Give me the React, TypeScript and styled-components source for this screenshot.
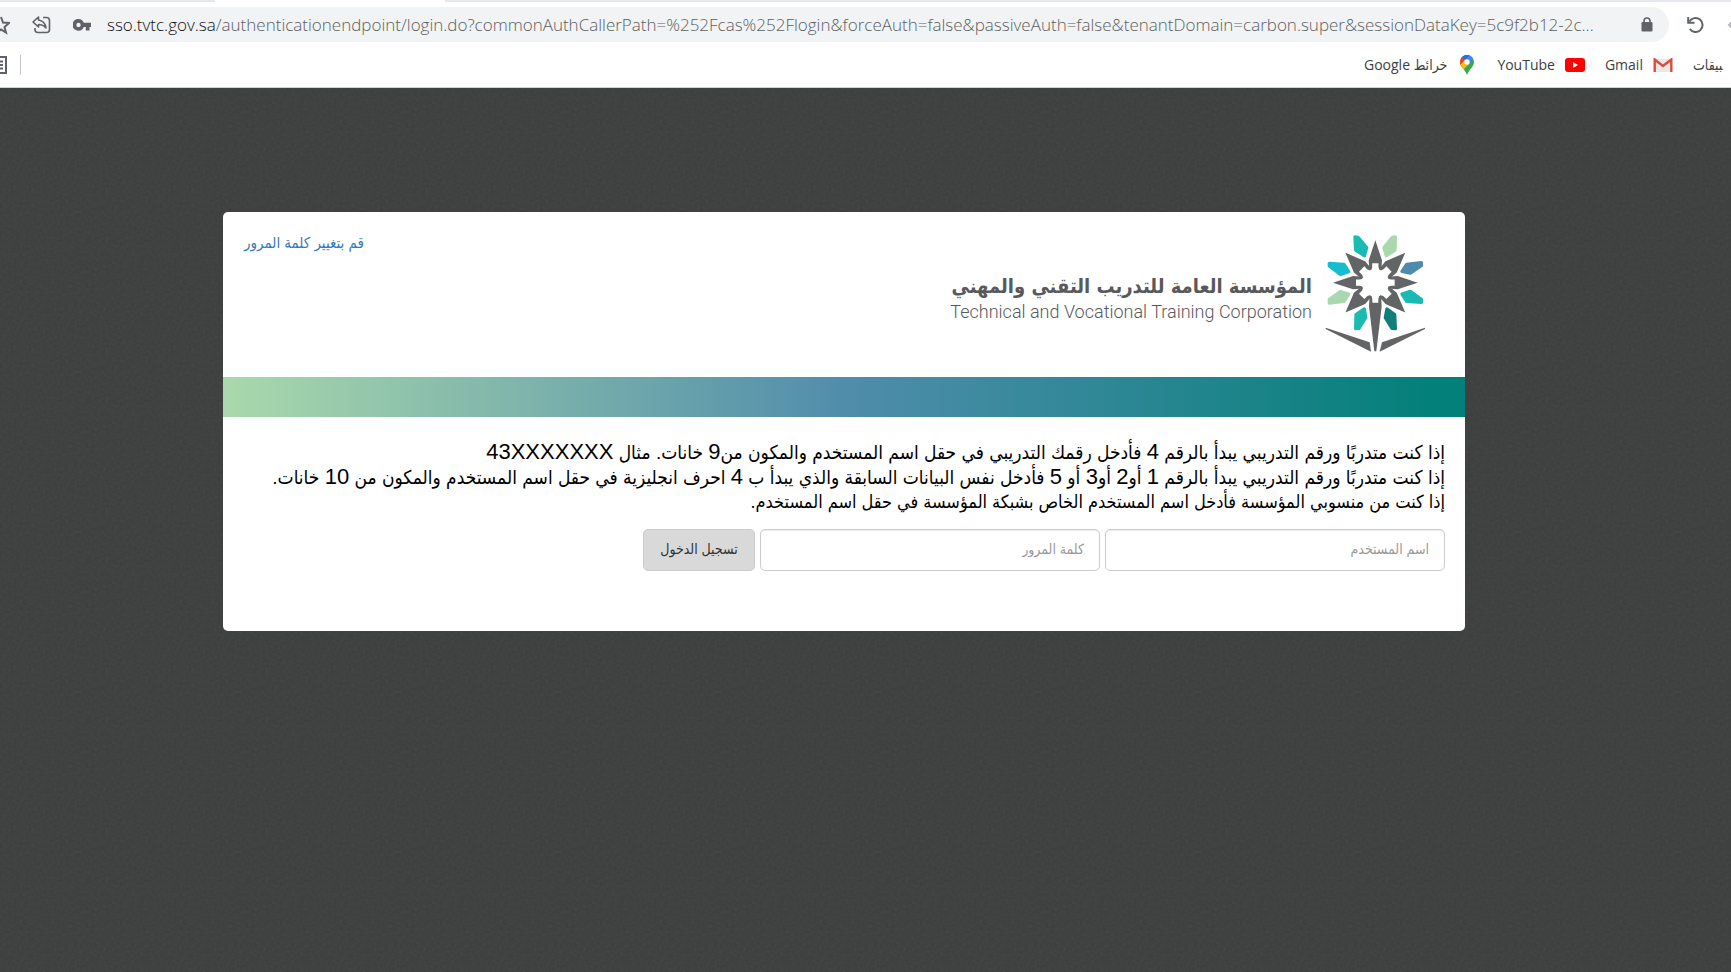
import React from "react";
import styled, { createGlobalStyle } from "styled-components";

const noise =
  "url(\"data:image/svg+xml,%3Csvg xmlns='http://www.w3.org/2000/svg' width='160' height='160'%3E%3Cfilter id='n'%3E%3CfeTurbulence type='fractalNoise' baseFrequency='0.35' numOctaves='3' stitchTiles='stitch'/%3E%3CfeColorMatrix type='saturate' values='0'/%3E%3C/filter%3E%3Crect width='160' height='160' filter='url(%23n)' opacity='0.07'/%3E%3C/svg%3E\")";

const arabic = '"DejaVu Sans Condensed", "DejaVu Sans", sans-serif';

const GlobalStyle = createGlobalStyle`
  *, *::before, *::after { box-sizing: border-box; }
  html, body { margin: 0; }
  body {
    background: #3b3c3c;
    font-family: "Liberation Sans", ${arabic};
    overflow-x: hidden;
  }
`;

const Window = styled.div`
  display: flex;
  flex-direction: column;
  min-height: 100vh;
  overflow: hidden;
`;

const Chrome = styled.header`
  height: 88px;
  background: #fff;
  border-bottom: 1px solid #d0d2d4;
  font-family: "Open Sans", ${arabic};
`;

const TabStrip = styled.div`
  display: flex;
  justify-content: space-between;
  gap: 230px;
  height: 2px;
`;

const TabEdge = styled.div<{ $grow?: boolean }>`
  width: 215px;
  flex: ${(p) => (p.$grow ? "1 1 auto" : "0 0 auto")};
  background: #e5e9ed;
`;

const AddressRow = styled.div`
  display: flex;
  align-items: center;
  height: 45px;
`;

const AddressBar = styled.div`
  display: flex;
  align-items: center;
  flex: 1;
  min-width: 0;
  height: 35px;
  padding-right: 16px;
  border-radius: 0 18px 18px 0;
  background: #f1f3f4;
`;

const Url = styled.div`
  flex: 1;
  min-width: 0;
  padding-left: 16px;
  overflow: hidden;
  white-space: nowrap;
  font-weight: 350;
  font-size: 17px;
  line-height: 24px;
  color: #5c5f63;
`;

const Host = styled.span`
  color: #111;
`;

const IconButton = styled.button<{ $w: number; $gap?: number }>`
  display: flex;
  flex: none;
  width: ${(p) => p.$w}px;
  margin: 0 0 0 ${(p) => p.$gap ?? 0}px;
  padding: 0;
  border: 0;
  background: none;
  color: #5f6368;
`;

const Bookmarks = styled.nav`
  display: flex;
  align-items: center;
  height: 36px;
`;

const Divider = styled.span`
  width: 1px;
  height: 20px;
  margin-left: 13px;
  background: #c6c8ca;
`;

const BookmarkList = styled.div`
  display: flex;
  align-items: center;
  gap: 20px;
  width: 367px;
  margin-left: auto;
  overflow: hidden;
`;

const Bookmark = styled.a`
  display: flex;
  flex: none;
  align-items: center;
  gap: 10px;
  color: #3c4043;
  font-size: 14px;
  line-height: 20px;
  text-decoration: none;
  white-space: nowrap;
`;

const Page = styled.main`
  flex: 1;
  padding: 124px 266px 40px 223px;
  background: #3b3c3c ${noise};
`;

const Card = styled.section`
  min-height: 419px;
  border-radius: 5px;
  background: #fff;
  overflow: hidden;
`;

const CardHeader = styled.div`
  display: flex;
  justify-content: space-between;
  height: 165px;
  padding: 21px 38px 0 21px;
`;

const ChangeLink = styled.a`
  height: 20px;
  color: #337ab7;
  font-size: 15px;
  line-height: 20px;
  text-decoration: none;
  white-space: nowrap;
`;

const Brand = styled.div`
  display: flex;
  gap: 13px;
`;

const BrandText = styled.div`
  display: flex;
  flex-direction: column;
  padding-top: 40px;
  color: #58595b;
  white-space: nowrap;
`;

const BrandArabic = styled.h1`
  margin: 0;
  font: bold 20px/26px ${arabic};
`;

const BrandEnglish = styled.p`
  margin: 0;
  font: 350 18px/26px Roboto, sans-serif;
  text-align: right;
`;

const Band = styled.div`
  height: 40px;
  background: linear-gradient(90deg, #a9d9ab, #508dab 50%, #04807a 97%);
`;

const Body = styled.div`
  padding: 23px 20px 60px;
`;

const Note = styled.p<{ $compact?: boolean }>`
  margin: 0;
  color: #000;
  font-size: ${(p) => (p.$compact ? 18 : 19)}px;
  line-height: 25px;
`;

const Num = styled.span`
  font-size: 22px;
  line-height: 20px;
`;

const Form = styled.form`
  display: flex;
  gap: 5px;
  margin-top: 14px;
`;

const Field = styled.input`
  flex: 0 1 340px;
  min-width: 0;
  height: 42px;
  padding: 0 15px 2px;
  border: 1px solid #ccc;
  border-radius: 5px;
  box-shadow: inset 0 1px 1px rgba(0, 0, 0, 0.08);
  background: #fff;
  font: 14px "Liberation Sans", ${arabic};
  &::placeholder {
    color: #999;
    opacity: 1;
  }
`;

const Submit = styled.button`
  width: 112px;
  height: 42px;
  padding: 0 0 2px;
  border: 1px solid #ccc;
  border-radius: 5px;
  background: #d9d9d9;
  color: #333;
  font: 14px "Liberation Sans", ${arabic};
  white-space: nowrap;
`;

const spikeTurns = [-135, -90, -45, 0, 45, 90, 135];

function BrandMark() {
  return (
    <svg width="102" height="120" viewBox="75 70 306 360" role="img" aria-label="TVTC">
      <g fill="#636466">
        {spikeTurns.map((a) => (
          <path
            key={a}
            transform={`rotate(${a} 226 219) translate(226 0) scale(${a % 90 ? 1.25 : 1.05} 1) translate(-226 0)`}
            d="M226 92 L245 152 L243 183 Q235 180 235 172 L235 161 H217 L217 172 Q217 180 209 183 L207 152Z"
          />
        ))}
        <path d="M209 256 Q217 260 217 268 V279 H235 V268 Q235 260 243 256 L245 290 L229 425 H223 L207 290Z" />
        <path d="M77 354 L209 398 L213 426 L77 358Z" />
        <path d="M375 354 L246 398 L239 426 L375 358Z" />
      </g>
      <g strokeWidth="10" strokeLinejoin="round">
        <path fill="#1bbab3" stroke="#1bbab3" d="M165 82 L174 83 L200 114 L193 138 L167 121Z" />
        <path fill="#a9d8ae" stroke="#a9d8ae" d="M286 82 L277 83 L252 114 L259 138 L285 121Z" />
        <path fill="#16bdd0" stroke="#16bdd0" d="M88 161 L132 164 L146 186 L121 194 L88 169Z" />
        <path fill="#4f8cab" stroke="#4f8cab" d="M364 159 L320 164 L306 185 L331 190 L364 168Z" />
        <path fill="#a9d8ae" stroke="#a9d8ae" d="M88 280 L88 269 L121 246 L146 253 L132 275Z" />
        <path fill="#1bbab3" stroke="#1bbab3" d="M364 278 L364 269 L331 245 L306 253 L320 275Z" />
        <path fill="#1bbab3" stroke="#1bbab3" d="M167 357 L168 315 L193 298 L197 324 L177 356Z" />
        <path fill="#107f7a" stroke="#107f7a" d="M286 357 L284 315 L261 298 L256 324 L276 356Z" />
      </g>
    </svg>
  );
}

export default function App() {
  return (
    <Window>
      <GlobalStyle />
      <Chrome>
        <TabStrip>
          <TabEdge />
          <TabEdge $grow />
        </TabStrip>
        <AddressRow>
          <AddressBar>
            <IconButton $w={10} aria-label="Bookmark this page">
              <svg width="10" height="20" viewBox="0 0 10 20" fill="none" stroke="currentColor" strokeWidth="2">
                <path d="M1 2 L3 7.500 L9 8 L4.500 12 L6 17.500 L1 14.500 L-4 18" />
              </svg>
            </IconButton>
            <IconButton $w={19} $gap={22} aria-label="Share this page">
              <svg width="19" height="18" viewBox="0 0 19 18" fill="none" stroke="currentColor" strokeWidth="1.600" strokeLinejoin="round">
                <path d="M11 1.500 H14.500 Q17.500 1.500 17.500 4.500 V13.500 Q17.500 16.500 14.500 16.500 H6 Q3 16.500 3 13.500 V12" />
                <path d="M1 6 L6.500 1 V4 Q13 5 14 12 Q11 8.500 6.500 8.500 V11Z" />
              </svg>
            </IconButton>
            <IconButton $w={18} $gap={22} aria-label="Saved passwords">
              <svg width="18" height="12" viewBox="0 0 18 12" fill="currentColor">
                <path fillRule="evenodd" d="M5.500 0 A5.800 5.800 0 0 1 10.800 3.800 H18 V8 H16.500 V11.500 H12.800 V8 H10.800 A5.800 5.800 0 1 1 5.500 0Z M5.500 3.700 A2.200 2.200 0 1 0 5.500 8.100 A2.200 2.200 0 0 0 5.500 3.700Z" />
              </svg>
            </IconButton>
            <Url>
              <Host>sso.tvtc.gov.sa</Host>
              /authenticationendpoint/login.do?commonAuthCallerPath=%252Fcas%252Flogin&amp;forceAuth=false&amp;passiveAuth=false&amp;tenantDomain=carbon.super&amp;sessionDataKey=5c9f2b12-2c...
            </Url>
            <IconButton $w={12} aria-label="Site information">
              <svg width="12" height="15" viewBox="0 0 12 15">
                <rect x="0.500" y="5" width="11" height="9.500" rx="1.200" fill="currentColor" />
                <path d="M3 6 V4 A3 3 0 0 1 9 4 V6" fill="none" stroke="currentColor" strokeWidth="1.600" />
              </svg>
            </IconButton>
          </AddressBar>
          <IconButton $w={18} $gap={18} aria-label="Reload">
            <svg width="18" height="18" viewBox="0 0 18 18" fill="none" stroke="currentColor" strokeWidth="2">
              <path d="M2.500 5.500 A7 7 0 1 1 2.800 13" />
              <path d="M1.200 1 V6.800 H7.500" />
            </svg>
          </IconButton>
          <IconButton $w={4} $gap={22} aria-label="Forward">
            <svg width="4" height="14" viewBox="0 0 4 14" fill="none" stroke="#b5b7ba" strokeWidth="2">
              <path d="M6 3 L2 7 L6 11" />
            </svg>
          </IconButton>
        </AddressRow>
        <Bookmarks aria-label="Bookmarks">
          <IconButton $w={7} aria-label="Reading list">
            <svg width="7" height="18" viewBox="0 0 7 18" fill="none" stroke="currentColor" strokeWidth="2">
              <path d="M0 1 H6 V17 H0 M0 5.500 H3 M0 9 H3 M0 12.500 H3" />
            </svg>
          </IconButton>
          <Divider />
          <BookmarkList>
            <Bookmark href="#maps">
              <span dir="rtl">خرائط Google</span>
              <svg width="20" height="20" viewBox="0 0 20 20">
                <clipPath id="pin">
                  <path d="M10 0 A7 7 0 0 1 17 7 C17 12 12 14 10 20 C8 14 3 12 3 7 A7 7 0 0 1 10 0Z" />
                </clipPath>
                <g clipPath="url(#pin)">
                  <path fill="#34a853" d="M0 0 H20 V20 H0Z" />
                  <path fill="#4285f4" d="M4 0 H18 V2 L10 11 L6 4Z" />
                  <path fill="#1a73e8" d="M3 0 H13 L7 6 L3 3Z" />
                  <path fill="#ea4335" d="M0 4 L5 2 L9 6 L3 13 L0 10Z" />
                  <path fill="#fbbc04" d="M2 11 L8 5 L12 9 L5 16Z" />
                </g>
                <circle cx="10" cy="7" r="2.700" fill="#fff" />
              </svg>
            </Bookmark>
            <Bookmark href="#youtube">
              YouTube
              <svg width="20" height="14" viewBox="0 0 20 14">
                <rect width="20" height="14" rx="3" fill="#f00" />
                <path fill="#fff" d="M8 4 L13 7 L8 10Z" />
              </svg>
            </Bookmark>
            <Bookmark href="#gmail">
              Gmail
              <svg width="20" height="14" viewBox="0 0 20 14">
                <path fill="#e8e8e8" d="M1 1 H19 V14 H1Z" />
                <path fill="none" stroke="#dd4b3e" strokeWidth="2.400" d="M1.700 14 V1.500 L10 8 L18.300 1.500 V14" />
              </svg>
            </Bookmark>
            <Bookmark href="#apps" dir="rtl">
              ‍بيقات
            </Bookmark>
          </BookmarkList>
        </Bookmarks>
      </Chrome>
      <Page>
        <Card>
          <CardHeader>
            <ChangeLink href="#change-password" dir="rtl">
              قم بتغيير كلمة المرور
            </ChangeLink>
            <Brand>
              <BrandText>
                <BrandArabic dir="rtl">المؤسسة العامة للتدريب التقني والمهني</BrandArabic>
                <BrandEnglish>Technical and Vocational Training Corporation</BrandEnglish>
              </BrandText>
              <BrandMark />
            </Brand>
          </CardHeader>
          <Band />
          <Body dir="rtl">
            <Note>
              إذا كنت متدربًا ورقم التدريبي يبدأ بالرقم <Num>4</Num> فأدخل رقمك التدريبي في حقل اسم المستخدم والمكون من<Num>9</Num> خانات. مثال <Num>43XXXXXXX</Num>
            </Note>
            <Note>
              إذا كنت متدربًا ورقم التدريبي يبدأ بالرقم <Num>1</Num> أو<Num>2</Num> أو<Num>3</Num> أو <Num>5</Num> فأدخل نفس البيانات السابقة والذي يبدأ ب <Num>4</Num> احرف انجليزية في حقل اسم المستخدم والمكون من <Num>10</Num> خانات.
            </Note>
            <Note $compact>إذا كنت من منسوبي المؤسسة فأدخل اسم المستخدم الخاص بشبكة المؤسسة في حقل اسم المستخدم.</Note>
            <Form onSubmit={(e) => e.preventDefault()}>
              <Field type="text" placeholder="اسم المستخدم" aria-label="اسم المستخدم" />
              <Field type="password" placeholder="كلمة المرور" aria-label="كلمة المرور" />
              <Submit type="submit">تسجيل الدخول</Submit>
            </Form>
          </Body>
        </Card>
      </Page>
    </Window>
  );
}
